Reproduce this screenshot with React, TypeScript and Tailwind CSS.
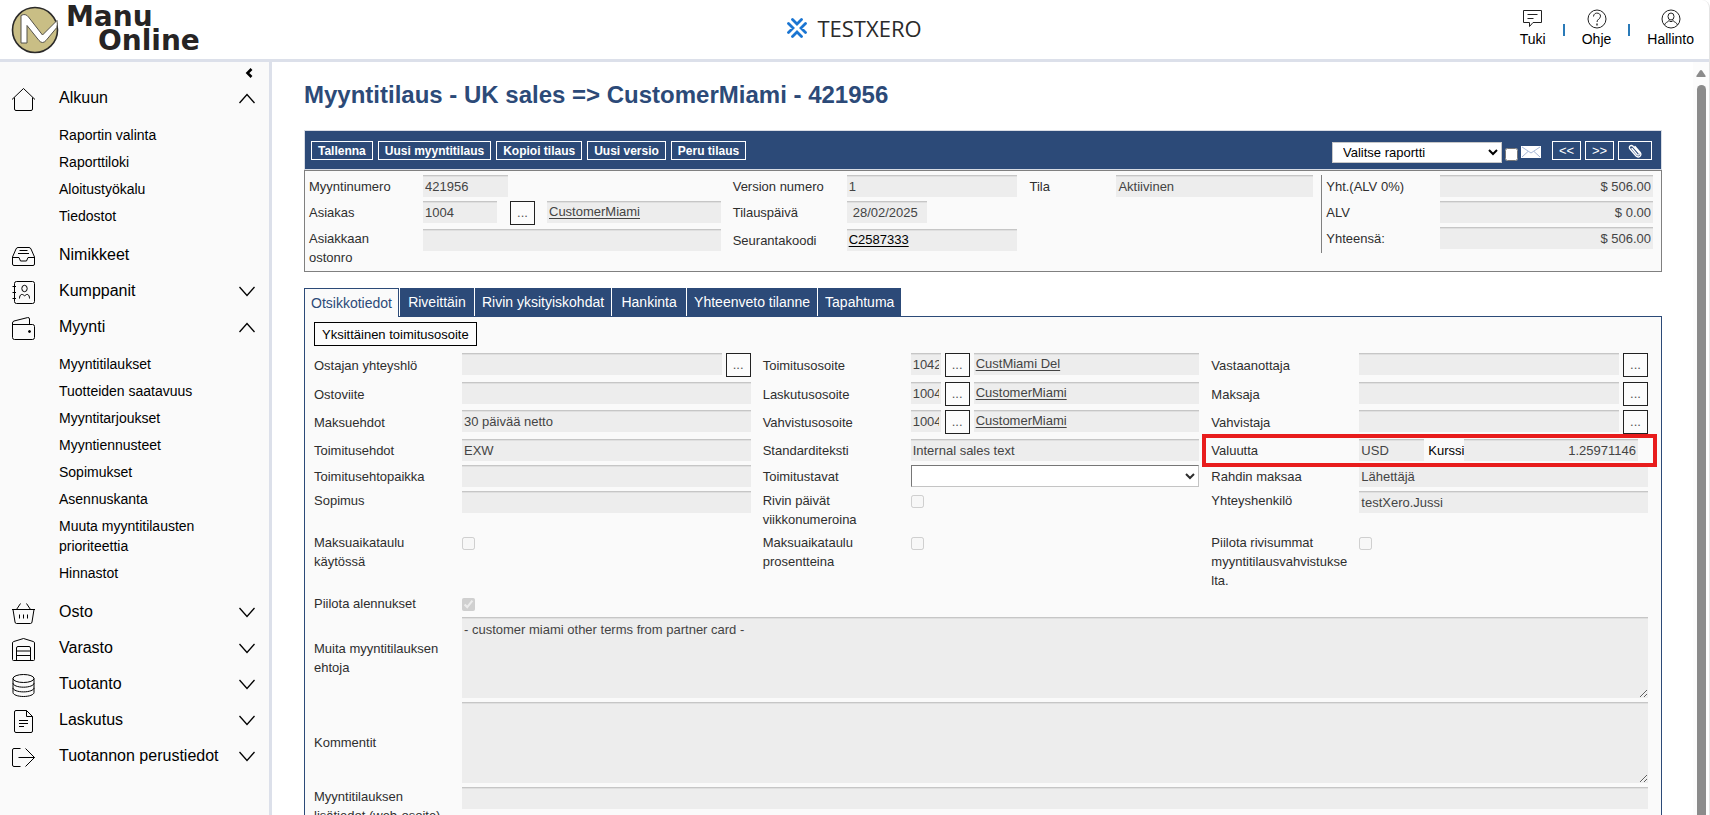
import React, { useId } from 'react'
import clsx from 'clsx'

const ICONS = {
  home: (
    <path d="M1 12.500 12.500 1.500 24 12.500M3.500 10.500V22q0 1.500 1.500 1.500h15q1.500 0 1.500-1.500V10.500" />
  ),
  inbox: (
    <>
      <path d="M1.500 13 5 5q.6-1.500 2-1.500h11q1.400 0 2 1.500l3.500 8v7q0 1.500-1.500 1.500H3q-1.500 0-1.500-1.500Z" />
      <path d="M1.500 13.500H8l1.500 3.500h6l1.500-3.500h6.500M8.500 6.500h8M7 9.500h11" />
    </>
  ),
  contacts: (
    <>
      <rect x="3.500" y="1.500" width="20" height="22" rx="2" />
      <path d="M1.500 6.500H5M1.500 12.500H5M1.500 18.500H5" />
      <ellipse cx="13.500" cy="8.500" rx="2.700" ry="3.200" />
      <path d="M8.500 18.500c0-4 2.500-5.500 5-2.500 2.500-3 5-1.500 5 2.500" />
    </>
  ),
  wallet: (
    <>
      <path d="M1.500 8.500h20q2 0 2 2v11q0 2-2 2h-18q-2 0-2-2V7q0-1.500 1.500-2l13.500-3.400q2-.4 2 1.400v5" />
      <circle cx="18.500" cy="15.500" r="1" fill="currentColor" />
    </>
  ),
  basket: (
    <>
      <path d="M1 8.500h23M2 8.500l2 12.500q.2 1.500 1.500 1.500h14q1.300 0 1.500-1.500l2-12.500M5.500 8.500l4-6M19.500 8.500l-4-6" />
      <path d="M8.500 13.500v4M12.500 13.500v4M16.500 13.500v4" />
    </>
  ),
  warehouse: (
    <>
      <path d="M1.500 22.500V6q0-1 1-1.400l10-3.100 10 3.100q1 .4 1 1.400v16.500q0 1-1 1h-20q-1 0-1-1Z" />
      <path d="M5.500 23.500V11q0-1.500 1.500-1.500h11q1.500 0 1.500 1.500v12.500M5.500 14h14M5.500 18.500h14" />
    </>
  ),
  database: (
    <>
      <ellipse cx="12.500" cy="5.500" rx="10.500" ry="4" />
      <path d="M2 5.500v14c0 2.200 4.700 4 10.500 4s10.500-1.800 10.500-4v-14M2 10.200c0 2.200 4.700 4 10.500 4s10.500-1.800 10.500-4M2 14.900c0 2.200 4.700 4 10.500 4s10.500-1.800 10.500-4" />
    </>
  ),
  document: (
    <>
      <path d="M5 1.500h10.500l6 6V22q0 1.500-1.500 1.500H5q-1.500 0-1.500-1.500V3q0-1.500 1.500-1.500Z" />
      <path d="M15.500 1.500v6h6M8 11.500h9M8 14.500h9M8 17.500h5" />
    </>
  ),
  exit: (
    <path d="M9.500 3.500H3q-1.500 0-1.500 1.500v15q0 1.500 1.500 1.500h6.500M7.500 12.500h16M14.500 3.500l9 9-9 9" />
  ),
}

type NavItem = {
  label: string
  icon: keyof typeof ICONS
  open?: boolean
  leaf?: boolean
  children?: string[]
}

const NAV: NavItem[] = [
  {
    label: 'Alkuun',
    icon: 'home',
    open: true,
    children: ['Raportin valinta', 'Raporttiloki', 'Aloitustyökalu', 'Tiedostot'],
  },
  { label: 'Nimikkeet', icon: 'inbox', leaf: true },
  { label: 'Kumppanit', icon: 'contacts' },
  {
    label: 'Myynti',
    icon: 'wallet',
    open: true,
    children: [
      'Myyntitilaukset',
      'Tuotteiden saatavuus',
      'Myyntitarjoukset',
      'Myyntiennusteet',
      'Sopimukset',
      'Asennuskanta',
      'Muuta myyntitilausten prioriteettia',
      'Hinnastot',
    ],
  },
  { label: 'Osto', icon: 'basket' },
  { label: 'Varasto', icon: 'warehouse' },
  { label: 'Tuotanto', icon: 'database' },
  { label: 'Laskutus', icon: 'document' },
  { label: 'Tuotannon perustiedot', icon: 'exit' },
]

const ACTIONS = ['Tallenna', 'Uusi myyntitilaus', 'Kopioi tilaus', 'Uusi versio', 'Peru tilaus']
const TABS = ['Otsikkotiedot', 'Riveittäin', 'Rivin yksityiskohdat', 'Hankinta', 'Yhteenveto tilanne', 'Tapahtuma']

const FIELD = 'h-[22px] min-w-0 border-t border-[#c6c6c6] bg-[#ededed] px-0.5 text-[13px] text-[#444] shadow-[inset_0_1px_0_#dfdfdf] outline-none'

function TextField({ className, ...props }: React.InputHTMLAttributes<HTMLInputElement>) {
  return <input type="text" readOnly className={clsx(FIELD, className ?? 'flex-1')} {...props} />
}

function LinkField({ children, dark }: { children: React.ReactNode; dark?: boolean }) {
  return (
    <div className={clsx(FIELD, 'flex-1 leading-5')}>
      <a href="#" className={clsx('underline underline-offset-2', dark && 'text-black')}>
        {children}
      </a>
    </div>
  )
}

function PickButton({ label }: { label: string }) {
  return (
    <button
      type="button"
      aria-label={label}
      className="h-6 w-[25px] shrink-0 border border-[#222] bg-[#fcfcfc] text-[13px] leading-5 text-[#555]"
    >
      ...
    </button>
  )
}

function Check({ id, checked = false }: { id: string; checked?: boolean }) {
  return <input id={id} type="checkbox" disabled defaultChecked={checked} className="mt-1 size-[13px]" />
}

function SummaryRow({
  label,
  narrow,
  wrap,
  children,
}: {
  label: string
  narrow?: boolean
  wrap?: boolean
  children: (id: string) => React.ReactNode
}) {
  const id = useId()
  return (
    <div className="flex items-start">
      <label htmlFor={id} className={clsx('shrink-0 pr-2.5', narrow ? 'w-[87px]' : 'w-[114px]', !wrap && 'pt-0.5')}>
        {label}
      </label>
      <div className="flex min-w-0 flex-1">{children(id)}</div>
    </div>
  )
}

function Row({
  label,
  top,
  className,
  children,
}: {
  label: string
  top?: boolean
  className?: string
  children: (id: string) => React.ReactNode
}) {
  const id = useId()
  return (
    <div className={clsx('flex items-start', className)}>
      <label htmlFor={id} className={clsx('w-[148px] shrink-0 pr-[11px] break-words', !top && 'self-center')}>
        {label}
      </label>
      <div className="flex min-w-0 flex-1 gap-1">{children(id)}</div>
    </div>
  )
}

function AddressRow({ label, code, name }: { label: string; code: string; name: string }) {
  return (
    <Row label={label}>
      {(id) => (
        <>
          <TextField id={id} className="w-[30px] shrink-0" defaultValue={code} />
          <PickButton label={`Valitse ${label}`} />
          <LinkField>{name}</LinkField>
        </>
      )}
    </Row>
  )
}

function PersonRow({ label }: { label: string }) {
  return (
    <Row label={label}>
      {(id) => (
        <>
          <TextField id={id} />
          <PickButton label={`Valitse ${label}`} />
        </>
      )}
    </Row>
  )
}

function Header() {
  return (
    <header className="grid h-[62px] shrink-0 grid-cols-[1fr_auto_1fr] items-center border-b-[3px] border-[#dce0ea]">
      <a href="#" className="flex items-center gap-[7px] pl-[11px]" aria-label="Manu Online">
        <svg viewBox="0 0 48 48" className="size-12">
          <circle cx="24" cy="24" r="22.500" fill="#c9be85" stroke="#2b2a29" strokeWidth="1.600" />
          <path
            d="M10 37V9.500q4.500-2.500 7.500 1.500L31.500 29 46 14.500q.8 4-.2 7L35 34.500q-3.500 4-7 0L16 19.500V37Z"
            fill="#fff"
            stroke="#55524a"
            strokeWidth="1"
          />
        </svg>
        <span className="pb-0.5 font-['DejaVu_Sans',sans-serif] text-[28px] leading-6 font-bold text-[#262424]">
          <span className="block">Manu</span>
          <span className="block pl-8">Online</span>
        </span>
      </a>
      <div className="flex items-center gap-2.5 pb-1">
        <svg viewBox="0 0 20 20" className="size-5" fill="none" stroke="#1a75d2" strokeWidth="2.800" strokeLinecap="round">
          <path d="M5.500 1.500 10 6 14.500 1.500M5.500 18.500 10 14 14.500 18.500M1.500 5.500 6 10 1.500 14.500M18.500 5.500 14 10 18.500 14.500" />
        </svg>
        <span className="font-['Open_Sans',sans-serif] text-[22px] leading-7 text-[#2a2a2a]">TESTXERO</span>
      </div>
      <nav className="flex items-center justify-end gap-[17px] self-start pt-[9px] pr-[15px] text-sm leading-4 text-black">
        <a href="#" className="flex flex-col items-center gap-0.5">
          <svg viewBox="0 0 20 20" className="size-5" fill="none" stroke="#222">
            <path d="M.5 1.500h18v12H10l-3.500 4v-4h-6ZM4.500 5.500h10M4.500 9.500h6" />
          </svg>
          Tuki
        </a>
        <span className="mt-1 h-3 w-0.5 bg-[#2a7ab8]" />
        <a href="#" className="flex flex-col items-center gap-0.5">
          <svg viewBox="0 0 20 20" className="size-5" fill="none" stroke="#222">
            <circle cx="10" cy="10" r="9" />
            <path d="M6.500 7.500C6.500 3 13.500 3 13.500 7.200 13.500 10 10 10 10 13" />
            <path d="M10 14.500v2" strokeWidth="1.400" />
          </svg>
          Ohje
        </a>
        <span className="mt-1 h-3 w-0.5 bg-[#2a7ab8]" />
        <a href="#" className="flex flex-col items-center gap-0.5">
          <svg viewBox="0 0 20 20" className="size-5" fill="none" stroke="#222">
            <circle cx="10" cy="10" r="9" />
            <ellipse cx="10" cy="7.500" rx="3" ry="3.500" />
            <path d="M3.500 16c1-3 3-2.500 4.500-4.500 1 1.500 3 1.500 4 0 1.500 2 3.500 1.500 4.500 4.500" />
          </svg>
          Hallinto
        </a>
      </nav>
    </header>
  )
}

function Sidebar() {
  return (
    <aside className="w-[272px] shrink-0 overflow-hidden border-r-[3px] border-[#dce0ea] bg-[#fafafa] text-black">
      <div className="flex h-[18px] items-start justify-end pt-1.5 pr-4">
        <button type="button" aria-label="Piilota valikko" className="h-2.5">
          <svg viewBox="0 0 8 10" className="h-2.5 w-2" fill="none" stroke="#000" strokeWidth="2.600">
            <path d="M6.500 1 2.500 5l4 4" />
          </svg>
        </button>
      </div>
      <nav>
        {NAV.map((item) => (
          <div key={item.label}>
            <button type="button" className="flex h-9 w-full items-center pr-3.5 pl-[11px] text-left text-base">
              <svg viewBox="0 0 25 25" className="mt-0.5 mr-[23px] size-[25px] shrink-0" fill="none" stroke="currentColor">
                {ICONS[item.icon]}
              </svg>
              <span className="flex-1">{item.label}</span>
              {item.leaf ? null : (
                <svg viewBox="0 0 16 16" className="size-4" fill="none" stroke="currentColor" strokeWidth="1.300">
                  <path d={item.open ? 'M.5 13 8 4.500l7.500 8.500' : 'M.5 4 8 12.500 15.500 4'} />
                </svg>
              )}
            </button>
            {item.children ? (
              <ul className="flex flex-col gap-[7px] pt-[9px] pr-12 pb-[11px] pl-[59px] text-sm">
                {item.children.map((child) => (
                  <li key={child}>
                    <a href="#" className="block">
                      {child}
                    </a>
                  </li>
                ))}
              </ul>
            ) : null}
          </div>
        ))}
      </nav>
    </aside>
  )
}

function Toolbar() {
  const small = 'flex h-[19px] items-center justify-center border border-white text-[13px] leading-4'
  return (
    <div className="flex h-10 items-start border border-[#d8dce4] bg-[#2c4a78] pt-2.5 pr-[9px] pl-1.5 text-white">
      <div className="flex flex-1 gap-[5px]">
        {ACTIONS.map((action) => (
          <button key={action} type="button" className="h-[19px] border border-white px-1.5 text-xs leading-4 font-bold">
            {action}
          </button>
        ))}
      </div>
      <div className="flex items-start">
        <select
          aria-label="Raportti"
          className="mt-px h-[21px] w-[170px] border border-[#c8c8c8] bg-white pl-1.5 text-[13px] text-black"
        >
          <option>Valitse raportti</option>
        </select>
        <input type="checkbox" aria-label="Lähetä sähköpostilla" className="mt-[7px] ml-[3px] size-[13px]" />
        <svg viewBox="0 0 20 12" className="mt-[5px] ml-[3px] h-3 w-5">
          <rect width="20" height="12" fill="#fff" />
          <path d="m1 1 9 6 9-6M1 11l6-5.500M19 11l-6-5.500" fill="none" stroke="#8fa5cc" strokeWidth=".8" />
        </svg>
        <div className="ml-[11px] flex gap-1">
          <button type="button" className={clsx(small, 'w-[29px]')}>
            &lt;&lt;
          </button>
          <button type="button" className={clsx(small, 'w-[29px]')}>
            &gt;&gt;
          </button>
          <button type="button" aria-label="Liitteet" className={clsx(small, 'w-[34px]')}>
            <svg viewBox="0 0 14 14" className="size-3.5" fill="none" stroke="#fff" strokeWidth="1.300" strokeLinecap="round">
              <path d="M4 4.500 9 10.500q1 1 1.800.3.900-.8 0-1.900L5 2.300Q3.500.8 2 2 .7 3.400 2 5l6 7q2 1.800 4 .2 1.700-1.700.2-3.700L7 2.500" />
            </svg>
          </button>
        </div>
      </div>
    </div>
  )
}

function Summary() {
  return (
    <section className="grid grid-cols-[424fr_297fr_292fr_332fr] items-start border border-[#808080] bg-[#fafafa] py-1 pr-2 pl-1">
      <div className="flex min-w-0 flex-col gap-1 pr-3">
        <SummaryRow label="Myyntinumero">{(id) => <TextField id={id} className="w-[85px]" defaultValue="421956" />}</SummaryRow>
        <SummaryRow label="Asiakas">
          {(id) => (
            <>
              <TextField id={id} className="mr-[13px] w-[74px]" defaultValue="1004" />
              <PickButton label="Valitse asiakas" />
              <div className="ml-3 flex flex-1">
                <LinkField>CustomerMiami</LinkField>
              </div>
            </>
          )}
        </SummaryRow>
        <SummaryRow label="Asiakkaan ostonro" wrap>
          {(id) => <TextField id={id} />}
        </SummaryRow>
      </div>
      <div className="flex min-w-0 flex-col gap-1 pr-3">
        <SummaryRow label="Version numero">{(id) => <TextField id={id} defaultValue="1" />}</SummaryRow>
        <div className="min-h-6">
          <SummaryRow label="Tilauspäivä">
            {(id) => <TextField id={id} className="w-20 pl-1.5" defaultValue="28/02/2025" />}
          </SummaryRow>
        </div>
        <SummaryRow label="Seurantakoodi">{() => <LinkField dark>C2587333</LinkField>}</SummaryRow>
      </div>
      <div className="min-w-0 pr-2">
        <SummaryRow label="Tila" narrow>
          {(id) => <TextField id={id} defaultValue="Aktiivinen" />}
        </SummaryRow>
      </div>
      <div className="flex min-w-0 flex-col gap-1 border-l border-[#808080] pb-1 pl-1">
        {[
          ['Yht.(ALV 0%)', '$ 506.00'],
          ['ALV', '$ 0.00'],
          ['Yhteensä:', '$ 506.00'],
        ].map(([label, value]) => (
          <SummaryRow key={label} label={label}>
            {(id) => <TextField id={id} className="flex-1 text-right" defaultValue={value} />}
          </SummaryRow>
        ))}
      </div>
    </section>
  )
}

function Tabs() {
  return (
    <div role="tablist" className="flex gap-px">
      {TABS.map((tab, i) => (
        <button
          key={tab}
          type="button"
          role="tab"
          aria-selected={i === 0}
          className={clsx(
            'relative min-w-[74px] text-sm',
            i === 0
              ? 'z-10 -mb-px h-[29px] border border-b-0 border-[#2c4a78] bg-[#fafafa] px-1.5 text-[#2c4a78]'
              : 'h-7 bg-[#2c4a78] px-[7px] text-white',
          )}
        >
          {tab}
        </button>
      ))}
    </div>
  )
}

function HeaderData() {
  return (
    <section className="border border-[#2c4a78] bg-[#fafafa] pt-[5px] pr-[13px] pb-8 pl-[9px]">
      <button type="button" className="mb-[7px] block h-6 border border-black bg-[#fcfcfc] px-[7px] text-[13px] text-black">
        Yksittäinen toimitusosoite
      </button>
      <div className="grid grid-cols-3 grid-rows-[25px_24px_25px_22px_22px] gap-x-3 gap-y-1">
        <PersonRow label="Ostajan yhteyshlö" />
        <AddressRow label="Toimitusosoite" code="10421" name="CustMiami Del" />
        <PersonRow label="Vastaanottaja" />

        <Row label="Ostoviite">{(id) => <TextField id={id} />}</Row>
        <AddressRow label="Laskutusosoite" code="10041" name="CustomerMiami" />
        <PersonRow label="Maksaja" />

        <Row label="Maksuehdot">{(id) => <TextField id={id} defaultValue="30 päivää netto" />}</Row>
        <AddressRow label="Vahvistusosoite" code="10041" name="CustomerMiami" />
        <PersonRow label="Vahvistaja" />

        <Row label="Toimitusehdot">{(id) => <TextField id={id} defaultValue="EXW" />}</Row>
        <Row label="Standarditeksti">{(id) => <TextField id={id} defaultValue="Internal sales text" />}</Row>
        <Row label="Valuutta" className="relative">
          {(id) => (
            <>
              <TextField id={id} className="w-[65px] shrink-0" defaultValue="USD" />
              <label className="mr-2.5 flex min-w-0 flex-1 items-center text-black">
                Kurssi
                <TextField className="flex-1 text-right" defaultValue="1.25971146" />
              </label>
              <span className="pointer-events-none absolute -inset-x-[9px] -top-[5px] -bottom-1.5 z-10 border-4 border-[#e81c1c]" />
            </>
          )}
        </Row>

        <Row label="Toimitusehtopaikka">{(id) => <TextField id={id} />}</Row>
        <Row label="Toimitustavat">
          {(id) => (
            <select
              id={id}
              className="h-[22px] min-w-0 flex-1 border border-t-[#767676] border-r-[#c4c4c4] border-b-[#c4c4c4] border-l-[#767676] bg-white text-[13px]"
            />
          )}
        </Row>
        <Row label="Rahdin maksaa">{(id) => <TextField id={id} defaultValue="Lähettäjä" />}</Row>

        <Row label="Sopimus" top>
          {(id) => <TextField id={id} />}
        </Row>
        <Row label="Rivin päivät viikkonumeroina">{(id) => <Check id={id} />}</Row>
        <Row label="Yhteyshenkilö" top>
          {(id) => <TextField id={id} defaultValue="testXero.Jussi" />}
        </Row>

        <Row label="Maksuaikataulu käytössä" top>
          {(id) => <Check id={id} />}
        </Row>
        <Row label="Maksuaikataulu prosentteina" top>
          {(id) => <Check id={id} />}
        </Row>
        <Row label="Piilota rivisummat myyntitilausvahvistukselta." top>
          {(id) => <Check id={id} />}
        </Row>

        <Row label="Piilota alennukset">{(id) => <Check id={id} checked />}</Row>

        <Row label="Muita myyntitilauksen ehtoja" className="col-span-3">
          {(id) => (
            <textarea
              id={id}
              readOnly
              className={clsx(FIELD, 'h-[81px] flex-1 pt-0.5')}
              defaultValue="- customer miami other terms from partner card -"
            />
          )}
        </Row>
        <Row label="Kommentit" className="col-span-3">
          {(id) => <textarea id={id} readOnly className={clsx(FIELD, 'h-[81px] flex-1 pt-0.5')} />}
        </Row>
        <Row label="Myyntitilauksen lisätiedot (web-osoite)" top className="col-span-3">
          {(id) => <TextField id={id} />}
        </Row>
      </div>
    </section>
  )
}

function Scrollbar() {
  return (
    <div className="flex w-4 shrink-0 flex-col items-center bg-[#fcfcfc] pt-2">
      <svg viewBox="0 0 10 7" className="h-[7px] w-2.5">
        <path d="M5 0q.6 0 1 .6L9.700 6q.2 1-.7 1H1Q.1 7 .3 6L4 .6Q4.400 0 5 0Z" fill="#8b8b8b" />
      </svg>
      <div className="mt-2 w-[9px] flex-1 rounded-t-full bg-[#8b8b8b]" />
    </div>
  )
}

export default function App() {
  return (
    <div className="flex h-screen flex-col overflow-hidden rounded-tr-lg border-r border-[#e4e4e4] bg-white font-['Liberation_Sans',Arial,sans-serif]">
      <Header />
      <div className="flex min-h-0 flex-1">
        <Sidebar />
        <main className="min-w-0 flex-1 overflow-hidden pr-[31px] pl-8 text-[13px] leading-[19px] text-[#2e2e2e]">
          <h1 className="pt-[17px] pb-[19px] text-2xl leading-8 font-bold text-[#2c4a78]">
            Myyntitilaus - UK sales =&gt; CustomerMiami - 421956
          </h1>
          <Toolbar />
          <Summary />
          <div className="pt-4">
            <Tabs />
            <HeaderData />
          </div>
        </main>
        <Scrollbar />
      </div>
    </div>
  )
}
